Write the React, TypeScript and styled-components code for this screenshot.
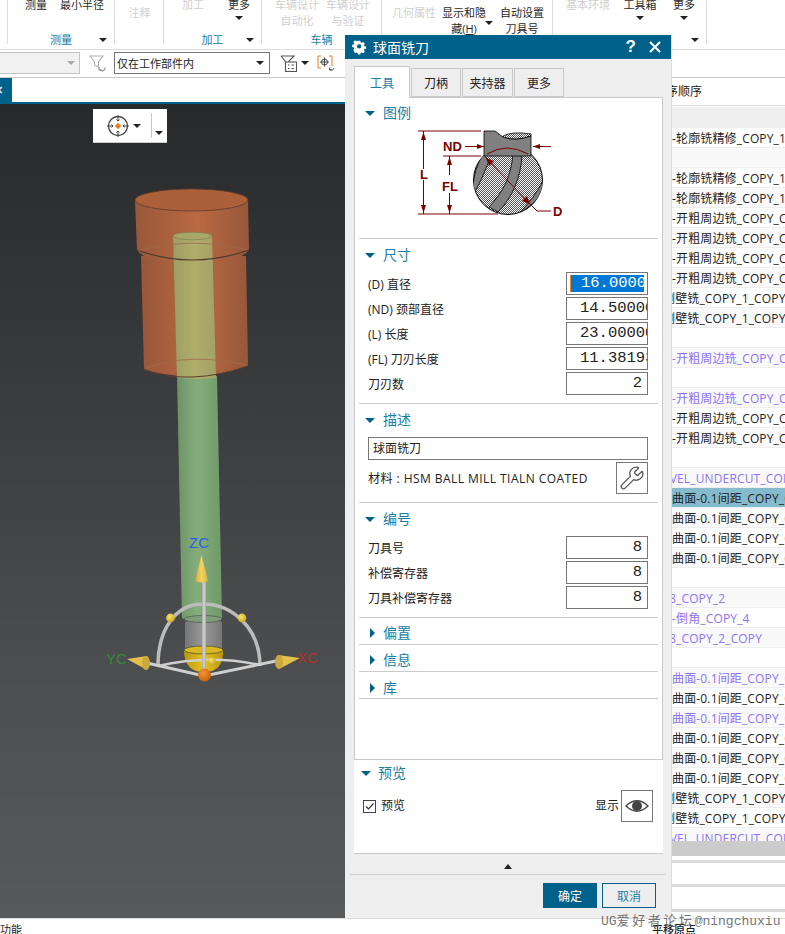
import React from "react";
import styled, { createGlobalStyle } from "styled-components";
import { Wrench } from "lucide-react";

const FONT = `"Open Sans", "Noto Sans CJK SC", "Noto Sans", sans-serif`;
const TEAL = "#00618a";
const HEAD = "#1a7ea3";

const Global = createGlobalStyle`
  html, body { margin: 0; padding: 0; background: #fff; overflow: hidden; }
  * { box-sizing: border-box; }
`;

const Page = styled.div`
  position: relative;
  width: 785px;
  height: 934px;
  overflow: hidden;
  font-family: ${FONT};
  font-size: 12px;
  color: #222;
  background: #fff;
`;

/* ---------- ribbon ---------- */
const Ribbon = styled.div`
  display: flex;
  height: 50px;
  border-bottom: 1px solid #dcdcdc;
  overflow: hidden;
  font-size: 11px;
`;
const Group = styled.div<{ $w: number }>`
  position: relative;
  flex: none;
  width: ${(p) => p.$w}px;
  height: 44px;
  border-right: 1px solid #dedede;
`;
const Tools = styled.div`
  display: flex;
  height: 32px;
`;
const Tool = styled.div<{ $w: number; $off?: boolean; $mid?: boolean }>`
  position: relative;
  flex: none;
  width: ${(p) => p.$w}px;
  display: flex;
  flex-direction: column;
  align-items: center;
  margin-top: ${(p) => (p.$mid ? 5 : -3)}px;
  line-height: 16px;
  white-space: nowrap;
  color: ${(p) => (p.$off ? "#cfcfcf" : "#2a2a2a")};
`;
const GroupFoot = styled.div`
  position: absolute;
  left: 0;
  right: 0;
  top: 32px;
  height: 16px;
  display: flex;
  justify-content: center;
  align-items: center;
  line-height: 16px;
  color: ${HEAD};
`;
const GroupCaret = styled.i`
  position: absolute;
  right: 7px;
  top: 6px;
  width: 0;
  height: 0;
  border: 4px solid transparent;
  border-top: 4px solid #222;
  border-bottom: 0;
`;
const Caret = styled.i<{ $gap?: number }>`
  display: inline-block;
  flex: none;
  width: 0;
  height: 0;
  margin-top: ${(p) => p.$gap ?? 0}px;
  border: 4px solid transparent;
  border-top: 4px solid #222;
  border-bottom: 0;
`;
const ToolCaret = styled(Caret)`
  position: absolute;
  right: -5px;
  top: 16px;
`;
const Spacer = styled.div<{ $w: number }>`
  flex: none;
  width: ${(p) => p.$w}px;
`;

/* ---------- top toolbar ---------- */
const Toolbar = styled.div`
  display: flex;
  align-items: center;
  height: 28px;
  border-bottom: 1px solid #c9c9c9;
  padding-bottom: 1px;
`;
const DisabledCombo = styled.div`
  flex: none;
  width: 81px;
  height: 22px;
  margin-left: -1px;
  border: 1px solid #c4c4c4;
  background: #f1f1f1;
  display: flex;
  align-items: center;
  justify-content: flex-end;
  padding-right: 4px;
  i { border-top-color: #aaa; }
`;
const Combo = styled.div`
  flex: none;
  width: 156px;
  height: 22px;
  border: 1px solid #777;
  display: flex;
  align-items: center;
  justify-content: space-between;
  padding: 0 5px 0 2px;
  font-size: 11px;
`;
const BarIcon = styled.svg<{ $l: number; $r: number }>`
  flex: none;
  margin-left: ${(p) => p.$l}px;
  margin-right: ${(p) => p.$r}px;
`;

/* ---------- content ---------- */
const Content = styled.div`
  display: flex;
  height: 840px;
`;
const LeftCol = styled.div`
  flex: none;
  width: 672px;
  display: flex;
  flex-direction: column;
`;
const TabStrip = styled.div`
  height: 26px;
  flex: none;
  border-bottom: 2px solid ${TEAL};
`;
const CloseTab = styled.div`
  width: 12px;
  height: 24px;
  background: ${TEAL};
  color: #dfe9ee;
  font-size: 11px;
  font-weight: 700;
  line-height: 24px;
  text-indent: -6px;
  overflow: hidden;
`;
const Viewport = styled.div`
  position: relative;
  height: 814px;
  background: linear-gradient(#28292b 0, #3a3b3d 35%, #4d4e50 70%, #58595b 100%);
  svg.scene { display: block; }
`;
const GizmoBar = styled.div`
  position: absolute;
  left: 93px;
  top: 5px;
  width: 74px;
  height: 34px;
  background: #fff;
  border-bottom: 1px solid #ccc;
  display: flex;
  align-items: center;
  padding-left: 13px;
`;
const GizmoSep = styled.div`
  width: 1px;
  height: 25px;
  background: #c8c8c8;
  margin: 0 3px 0 10px;
`;

/* ---------- right list ---------- */
const RightCol = styled.div`
  flex: none;
  width: 113px;
  display: flex;
  flex-direction: column;
  overflow: hidden;
`;
const ListHead = styled.div`
  height: 28px;
  flex: none;
  line-height: 28px;
  border-bottom: 1px solid #d8d8d8;
  font-size: 12px;
  margin-left: -6px;
  white-space: nowrap;
`;
const ColHead = styled.div`
  height: 22px;
  flex: none;
  background: #efefef;
  border-top: 1px solid #fff;
`;
const Rows = styled.div`
  height: 713px;
  flex: none;
  overflow: hidden;
`;
const Row = styled.div<{ $tone?: string; $sel?: boolean; $alt?: boolean; $shift?: number }>`
  height: 20px;
  line-height: 21px;
  font-size: 12px;
  letter-spacing: 0.15px;
  white-space: nowrap;
  overflow: hidden;
  border-bottom: 1px solid #eeeeee;
  color: ${(p) => (p.$tone === "p" ? "#8c74f5" : "#222")};
  background: ${(p) => (p.$sel ? "#84bccd" : p.$alt ? "#f9f9f9" : "#fff")};
  span { display: inline-block; margin-left: ${(p) => p.$shift ?? 0}px; }
`;
const GreyBar = styled.div`
  height: 15px;
  flex: none;
  background: #cbcbcb;
`;
const Tail = styled.div<{ $h: number }>`
  height: ${(p) => p.$h}px;
  flex: none;
  border-bottom: 3px solid #d9d9d9;
`;

/* ---------- status ---------- */
const Status = styled.div`
  position: relative;
  height: 16px;
  border-top: 1px solid #dcdcdc;
  line-height: 21px;
  font-size: 11px;
  color: #222;
`;
const StatusRight = styled.span`
  position: absolute;
  left: 652px;
  top: 0;
  font-weight: 500;
`;
const Watermark = styled.div`
  position: absolute;
  left: 601px;
  top: 914px;
  font-family: "Liberation Mono", "Noto Sans CJK SC", monospace;
  font-size: 13px;
  line-height: 16px;
  color: rgba(90, 90, 90, 0.85);
  white-space: nowrap;
  em { font-style: normal; letter-spacing: 2.6px; }
`;

/* ---------- dialog ---------- */
const Dialog = styled.div`
  position: absolute;
  left: 345px;
  top: 35px;
  width: 327px;
  height: 883px;
  background: #eeeeee;
  border-right: 1px solid #dcdcdc;
  display: flex;
  flex-direction: column;
`;
const TitleBar = styled.div`
  height: 24px;
  flex: none;
  background: ${TEAL};
  color: #fff;
  display: flex;
  align-items: center;
  padding: 0 10px 0 6px;
  font-size: 14px;
`;
const TitleText = styled.div`
  margin-left: 6px;
  flex: 1;
`;
const HelpMark = styled.span`
  font-family: "Liberation Sans", sans-serif;
  font-weight: 700;
  font-size: 17px;
  line-height: 24px;
  margin-right: 13px;
`;
const TabsRow = styled.div`
  display: flex;
  align-items: flex-end;
  height: 38px;
  flex: none;
  padding-left: 9px;
`;
const Tab = styled.div<{ $w: number; $active?: boolean }>`
  flex: none;
  width: ${(p) => p.$w}px;
  height: ${(p) => (p.$active ? 32 : 29)}px;
  margin-bottom: ${(p) => (p.$active ? -1 : 0)}px;
  margin-right: 1px;
  position: relative;
  z-index: ${(p) => (p.$active ? 2 : 0)};
  display: flex;
  align-items: center;
  justify-content: center;
  border: 1px solid #c9c9c9;
  border-bottom: ${(p) => (p.$active ? "0" : "1px solid #c9c9c9")};
  background: ${(p) => (p.$active ? "#fff" : "#eeeeee")};
  color: ${(p) => (p.$active ? HEAD : "#222")};
`;
const Panel = styled.div`
  flex: none;
  width: 309px;
  height: 663px;
  margin-left: 9px;
  background: #fff;
  border: 1px solid #c9c9c9;
`;
const Section = styled.section<{ $top: number; $bottom: number }>`
  margin: 0 4px;
  padding: ${(p) => p.$top}px 0 ${(p) => p.$bottom}px;
  border-bottom: 1px solid #cbcbcb;
`;
const Head = styled.div<{ $pad?: number; $gap?: number }>`
  display: flex;
  align-items: center;
  height: 16px;
  padding-left: ${(p) => p.$pad ?? 6}px;
  gap: ${(p) => p.$gap ?? 8}px;
  color: ${HEAD};
  font-size: 14px;
  line-height: 16px;
`;
const ArrowBox = styled.span`
  display: flex;
  width: 10px;
  flex: none;
`;
const ArrowDown = styled.i`
  width: 0;
  height: 0;
  border: 5px solid transparent;
  border-top: 5px solid ${TEAL};
  border-bottom: 0;
`;
const ArrowRight = styled.i`
  width: 0;
  height: 0;
  margin-left: 5px;
  border: 5px solid transparent;
  border-left: 5px solid ${TEAL};
  border-right: 0;
`;
const Legend = styled.svg`
  display: block;
  margin-left: 41px;
`;
const Fields = styled.div`
  display: flex;
  flex-direction: column;
  gap: 2px;
  margin-top: 9px;
  padding: 0 10px 0 9px;
`;
const Field = styled.div`
  display: flex;
  align-items: center;
  justify-content: space-between;
  height: 23px;
`;
const Box = styled.div<{ $num?: boolean; $sel?: boolean }>`
  position: relative;
  flex: none;
  width: 82px;
  height: 23px;
  border: 1px solid #777;
  background: #fff;
  overflow: hidden;
  white-space: nowrap;
  font-family: "Liberation Mono", monospace;
  font-size: 15.5px;
  line-height: 21px;
  color: #222;
  padding-left: ${(p) => (p.$num ? 0 : 13)}px;
  padding-right: ${(p) => (p.$num ? 5 : 0)}px;
  text-align: ${(p) => (p.$num ? "right" : "left")};
`;
const Selected = styled.span`
  position: absolute;
  left: 3px;
  top: 2px;
  width: 74px;
  height: 17px;
  background: #0078d7;
  color: #fff;
  line-height: 17px;
  padding-left: 10px;
  border-left: 1px solid #f08a24;
  overflow: hidden;
`;
const TextBox = styled.div`
  height: 23px;
  border: 1px solid #777;
  padding-left: 4px;
  line-height: 21px;
`;
const MaterialRow = styled.div`
  display: flex;
  align-items: center;
  justify-content: space-between;
  height: 32px;
`;
const MaterialText = styled.span`
  letter-spacing: 0.45px;
  white-space: nowrap;
`;
const IconBtn = styled.div`
  flex: none;
  width: 32px;
  height: 32px;
  border: 1px solid #777;
  background: #fff;
  display: flex;
  align-items: center;
  justify-content: center;
  color: #555;
`;
const PreviewArea = styled.div`
  flex: none;
  width: 309px;
  height: 94px;
  margin-left: 9px;
  background: #fff;
  border-bottom: 1px solid #c9c9c9;
  padding-top: 5px;
`;
const PreviewRow = styled.div`
  display: flex;
  align-items: center;
  margin-top: 9px;
  padding: 0 10px 0 9px;
  line-height: 14px;
`;
const Check = styled.span`
  flex: none;
  width: 13px;
  height: 13px;
  border: 1px solid #444;
  margin-right: 5px;
  display: flex;
  align-items: center;
  justify-content: center;
`;
const PreviewShow = styled.span`
  margin-left: auto;
  margin-right: 2px;
`;
const Fold = styled.div`
  flex: none;
  height: 21px;
  margin: 0 6px 0 5px;
  border-bottom: 1px solid #cfcfcf;
  display: flex;
  justify-content: center;
  align-items: center;
  padding-top: 5px;
  i {
    width: 0;
    height: 0;
    border: 4.5px solid transparent;
    border-bottom: 5px solid #222;
    border-top: 0;
  }
`;
const Footer = styled.div`
  display: flex;
  justify-content: flex-end;
  gap: 5px;
  padding: 8px 15px 0 0;
`;
const Btn = styled.div<{ $primary?: boolean }>`
  width: 54px;
  height: 25px;
  display: flex;
  align-items: center;
  justify-content: center;
  background: ${(p) => (p.$primary ? TEAL : "transparent")};
  color: ${(p) => (p.$primary ? "#fff" : HEAD)};
  border: 1px solid ${TEAL};
`;

const COPY = "-开粗周边铣_COPY_COPY";
const RING = "-轮廓铣精修_COPY_1";
const SURF = "曲面-0.1间距_COPY_COPY";
const WALL = "侧壁铣_COPY_1_COPY_1";
const UND = "BEVEL_UNDERCUT_COPY";

type R = { t?: string; p?: boolean; sel?: boolean; s?: number };
const rows: R[] = [
  { t: RING }, {}, { t: RING }, { t: RING }, { t: COPY }, { t: COPY }, { t: COPY }, { t: COPY },
  { t: WALL, s: -9 }, { t: WALL, s: -9 }, {}, { t: COPY, p: true }, {}, { t: COPY, p: true },
  { t: COPY }, { t: COPY }, {}, { t: UND, p: true, s: -17 }, { t: SURF, sel: true }, { t: SURF },
  { t: SURF }, { t: SURF }, {}, { t: "8_COPY_2", p: true, s: -3 }, { t: "-倒角_COPY_4", p: true },
  { t: "8_COPY_2_COPY", p: true, s: -3 }, {}, { t: SURF, p: true }, { t: SURF }, { t: SURF, p: true },
  { t: SURF }, { t: SURF }, { t: SURF }, { t: WALL, s: -9 }, { t: WALL, s: -9 }, { t: UND, p: true, s: -17 },
];

const Scene = () => (
  <svg className="scene" width={345} height={814} viewBox="0 104 345 814">
    <defs>
      <linearGradient id="org" x1="0" x2="1" y1="0" y2="0">
        <stop offset="0" stopColor="#99573a" />
        <stop offset="0.55" stopColor="#b96a42" />
        <stop offset="1" stopColor="#97573a" />
      </linearGradient>
      <linearGradient id="grn" x1="0" x2="1" y1="0" y2="0">
        <stop offset="0" stopColor="#6b9466" />
        <stop offset="0.45" stopColor="#86ad7c" />
        <stop offset="1" stopColor="#6f9969" />
      </linearGradient>
      <linearGradient id="olv" x1="0" x2="1" y1="0" y2="0">
        <stop offset="0" stopColor="#9d9d62" />
        <stop offset="0.5" stopColor="#b0ad6c" />
        <stop offset="1" stopColor="#a3a165" />
      </linearGradient>
      <linearGradient id="gry" x1="0" x2="1" y1="0" y2="0">
        <stop offset="0" stopColor="#777" />
        <stop offset="0.5" stopColor="#999" />
        <stop offset="1" stopColor="#777" />
      </linearGradient>
      <linearGradient id="yel" x1="0" x2="1" y1="0" y2="0">
        <stop offset="0" stopColor="#b8960f" />
        <stop offset="0.5" stopColor="#e8c31f" />
        <stop offset="1" stopColor="#b8960f" />
      </linearGradient>
      <linearGradient id="cone" x1="0" x2="1" y1="0" y2="0">
        <stop offset="0" stopColor="#c9a93c" />
        <stop offset="0.5" stopColor="#f4d35e" />
        <stop offset="1" stopColor="#d6b546" />
      </linearGradient>
      <linearGradient id="bar" x1="0" x2="1" y1="0" y2="0">
        <stop offset="0" stopColor="#a8a8a8" />
        <stop offset="0.5" stopColor="#d4d4d4" />
        <stop offset="1" stopColor="#a8a8a8" />
      </linearGradient>
      <radialGradient id="ball" cx="0.4" cy="0.35" r="0.7">
        <stop offset="0" stopColor="#f7e46a" />
        <stop offset="1" stopColor="#c9a41e" />
      </radialGradient>
      <radialGradient id="orb" cx="0.4" cy="0.35" r="0.7">
        <stop offset="0" stopColor="#f19433" />
        <stop offset="1" stopColor="#c9600f" />
      </radialGradient>
    </defs>
    {/* shaft */}
    <path d="M177 376 L182 618 Q202 628 222 618 L217 376 Z" fill="url(#grn)" />
    {/* lower holder */}
    <path d="M141 256 L144 369 Q190 385 248 366 L246 256 Z" fill="url(#org)" />
    {/* upper holder */}
    <path d="M135 200 L137 250 Q145 263 192 263 Q240 263 249 250 L248 200 Z" fill="url(#org)" />
    <ellipse cx="191.5" cy="200" rx="56.5" ry="11" fill="#ab6039" stroke="#5c3a2a" strokeWidth="0.8" />
    {/* inner tube */}
    <path d="M173 236 L177 378 Q197 380 216 378 L212 236 Z" fill="url(#olv)" />
    <ellipse cx="192.5" cy="236" rx="19.5" ry="3.8" fill="#a9a66a" stroke="#7d7b52" strokeWidth="0.7" />
    {/* rims */}
    <path d="M137 250 Q192 270 249 250" fill="none" stroke="#4e3a30" strokeWidth="1.2" />
    <path d="M138 251 Q190 236 248 250" fill="none" stroke="#a0694a" strokeWidth="0.8" />
    <path d="M144 370 Q190 386 248 366" fill="none" stroke="#5a3d2e" strokeWidth="1" />
    <path d="M146 368 Q190 352 246 365" fill="none" stroke="#a0694a" strokeWidth="0.8" />
    {/* tip */}
    <path d="M185 622 L185 648 L222 648 L222 622 Q203 612 185 622 Z" fill="url(#gry)" />
    <ellipse cx="203" cy="619" rx="19" ry="3.5" fill="#7f9f7a" stroke="#3d4a3c" strokeWidth="0.6" />
    <path d="M184 650 Q184 672 204 672 Q224 672 223 650 Z" fill="url(#yel)" />
    <ellipse cx="203.5" cy="650" rx="19.5" ry="4" fill="#dab81f" stroke="#333" strokeWidth="0.6" />
    {/* gizmo */}
    <path d="M158 666 C158 630 175 604 203 604 C232 604 260 628 260 666" fill="none" stroke="#bcbcbc" strokeWidth="3.5" />
    <path d="M158 666 Q210 654 260 665" fill="none" stroke="#cfcfcf" strokeWidth="2.5" />
    <path d="M147 663 L204 676 L276 661" fill="none" stroke="#cfcfcf" strokeWidth="3" />
    <rect x="202" y="580" width="4" height="92" fill="url(#bar)" />
    <path d="M201.5 555 L195 581 Q201.5 584 208 581 Z" fill="url(#cone)" />
    <path d="M127 659 L147 656 Q151 664 147 670 Z" fill="#e2c04b" />
    <ellipse cx="146" cy="663" rx="4" ry="7" fill="#c9a93c" />
    <path d="M300 658 L278 655 Q274 662 279 669 Z" fill="#e2c04b" />
    <ellipse cx="279" cy="662" rx="4" ry="7" fill="#c9a93c" />
    <circle cx="170.5" cy="618" r="4.4" fill="url(#ball)" />
    <circle cx="242" cy="618" r="4.4" fill="url(#ball)" />
    <circle cx="212" cy="661" r="3.8" fill="url(#ball)" />
    <circle cx="204.5" cy="675" r="6.5" fill="url(#orb)" />
    <text x="189" y="548" fontSize="15" fill="#2a62e6" fontFamily="'Liberation Sans', sans-serif">ZC</text>
    <text x="106" y="664" fontSize="15" fill="#36893a" fontFamily="'Liberation Sans', sans-serif">YC</text>
    <text x="297" y="663" fontSize="15" fill="#b3312e" fontFamily="'Liberation Sans', sans-serif">XC</text>
  </svg>
);

const LegendArt = () => (
  <Legend width={180} height={105} viewBox="0 0 180 105">
    <defs>
      <pattern id="chk" width="2" height="2" patternUnits="userSpaceOnUse">
        <rect width="2" height="2" fill="#fff" />
        <rect width="1" height="1" fill="#555" />
        <rect x="1" y="1" width="1" height="1" fill="#555" />
      </pattern>
      <clipPath id="sphere"><circle cx="108" cy="59" r="34.5" /></clipPath>
    </defs>
    <circle cx="108" cy="59" r="34.5" fill="url(#chk)" stroke="#000" />
    <g clipPath="url(#sphere)" fill="#808080" stroke="#000" strokeWidth="0.8">
      <path d="M83 33 L89 40 Q82 58 75 71 L73 66 Q74 48 83 33 Z" />
      <path d="M113 33 C111 56 103 71 89 86 L98 91 C112 77 121 57 122 33 Z" />
      <path d="M144 58 L144 70 Q134 84 118 93 Q134 78 144 58 Z" />
    </g>
    <path d="M103 15 Q112 10 131 13 L131 15 Q115 21 103 16 Z" fill="url(#chk)" stroke="#000" strokeWidth="0.8" />
    <path d="M84 10 L95 10 L103 16 Q115 21 131 15 L131 35 L84 35 Z" fill="#808080" stroke="#000" strokeWidth="0.8" />
    <g stroke="#7a0000" fill="none" strokeWidth="1">
      <path d="M87 33 Q107 21 128 33" />
      <path d="M18 10 H81 M18 93 H98 M43 35 H81" />
      <path d="M23.5 10 V48 M23.5 59 V93 M49.5 35 V54 M49.5 72 V93" />
      <path d="M65 25.5 H84 M133 25.5 H151" />
      <path d="M86 37 L130 83 L137 90 H151" />
    </g>
    <g fill="#7a0000">
      <path d="M23.5 11 L21 19 H26 Z M23.5 92 L21 84 H26 Z M49.5 36 L47 44 H52 Z M49.5 92 L47 84 H52 Z" />
      <path d="M84 25.5 L77 23 V28 Z M133 25.5 L140 23 V28 Z" />
      <path d="M86 37 L89 45 L94 40 Z M130 83 L127 75 L122 80 Z" />
    </g>
    <g fill="#7a0000" fontWeight="700" fontSize="13" fontFamily="'Liberation Sans', sans-serif">
      <text x="43" y="30">ND</text>
      <text x="20" y="58">L</text>
      <text x="42" y="70">FL</text>
      <text x="153" y="95">D</text>
    </g>
  </Legend>
);

const Gear = () => (
  <svg width="16" height="16" viewBox="0 0 16 16">
    <path
      fill="#fff"
      fillRule="evenodd"
      d="M6.6 1h2.8l.4 2 1.3.6 1.8-1 1.9 2-1 1.7.5 1.3 2 .4v2.7l-2 .4-.5 1.3 1 1.8-1.9 1.9-1.8-1-1.3.5-.4 2H6.6l-.4-2-1.3-.5-1.8 1L1.2 12.2l1-1.8-.5-1.3-2-.4V6l2-.4.5-1.3-1-1.7 1.9-2 1.8 1 1.3-.6zM8 5.2a2.6 2.6 0 100 5.2 2.6 2.6 0 000-5.2z"
      transform="translate(1.4 .8) scale(.84)"
    />
  </svg>
);

const CloseX = () => (
  <svg width="12" height="12" viewBox="0 0 12 12" stroke="#fff" strokeWidth="2">
    <path d="M1 1l10 10M11 1L1 11" />
  </svg>
);

const EyeIcon = () => (
  <svg width="24" height="16" viewBox="0 0 24 16" fill="none">
    <path d="M1 8 Q12 -2.5 23 8 Q12 18.5 1 8 Z" stroke="#444" strokeWidth="1.3" />
    <circle cx="12" cy="8" r="5" fill="#444" />
  </svg>
);

const fields = [
  { label: "(ND) 颈部直径", v: "14.50000" },
  { label: "(L) 长度", v: "23.00000" },
  { label: "(FL) 刀刃长度", v: "11.38193" },
];

const App = () => (
  <>
    <Global />
    <Page>
      <Ribbon>
        <Group $w={8} />
        <Group $w={107}>
          <Tools>
            <Spacer $w={8} />
            <Tool $w={40}>测量</Tool>
            <Tool $w={52}>最小半径</Tool>
          </Tools>
          <GroupFoot>测量<GroupCaret /></GroupFoot>
        </Group>
        <Group $w={49}>
          <Tools>
            <Tool $w={49} $off $mid>注释</Tool>
          </Tools>
        </Group>
        <Group $w={98}>
          <Tools>
            <Spacer $w={5} />
            <Tool $w={48} $off>加工</Tool>
            <Tool $w={44}>更多<Caret $gap={3} /></Tool>
          </Tools>
          <GroupFoot>加工<GroupCaret /></GroupFoot>
        </Group>
        <Group $w={120}>
          <Tools>
            <Spacer $w={6} />
            <Tool $w={58} $off>车辆设计<span>自动化</span></Tool>
            <Tool $w={44} $off>车辆设计<span>与验证</span></Tool>
          </Tools>
          <GroupFoot>车辆</GroupFoot>
        </Group>
        <Group $w={171}>
          <Tools>
            <Spacer $w={6} />
            <Tool $w={52} $off $mid>几何属性</Tool>
            <Tool $w={48} $mid>显示和隐<span>藏(<u>H</u>)</span><ToolCaret /></Tool>
            <Spacer $w={10} />
            <Tool $w={48} $mid>自动设置<span>刀具号</span></Tool>
          </Tools>
        </Group>
        <Group $w={154}>
          <Tools>
            <Spacer $w={6} />
            <Tool $w={58} $off>基本环境</Tool>
            <Tool $w={46}>工具箱<Caret $gap={3} /></Tool>
            <Tool $w={42}>更多<Caret $gap={3} /></Tool>
          </Tools>
          <GroupFoot><GroupCaret /></GroupFoot>
        </Group>
      </Ribbon>
      <Toolbar>
        <DisabledCombo><Caret /></DisabledCombo>
        <BarIcon $l={9} $r={8} width="17" height="18" viewBox="0 0 17 18" fill="none" stroke="#b0b0b0" strokeWidth="1.1">
          <path d="M1 2h13L9.5 8v5L5.5 11V8z" />
          <path d="M16 13.5a3 3 0 01-5.5 2M10 13v3h3" stroke="#8d8d8d" />
        </BarIcon>
        <Combo>仅在工作部件内<Caret /></Combo>
        <BarIcon $l={10} $r={3} width="18" height="18" viewBox="0 0 18 18" fill="none" stroke="#555" strokeWidth="1.1">
          <path d="M1 2h13L9 7v1M5 8V7L1 2" />
          <rect x="5.5" y="8" width="11" height="9.5" fill="#fff" />
          <path d="M8 11h1.5M8 14.5h1.5M11.5 11h2.5M11.5 14.5h2.5" />
        </BarIcon>
        <Caret />
        <BarIcon $l={8} $r={0} width="18" height="18" viewBox="0 0 18 18" fill="none">
          <path d="M4 2H1v12h3M12 2h3v10" stroke="#e07c1e" />
          <circle cx="7.5" cy="8" r="3" stroke="#444" />
          <path d="M3 8h9M7.5 3.5v9" stroke="#444" />
          <path d="M17 14a2.5 2.5 0 01-4 1.5M12.5 13.5V16H15" stroke="#555" />
        </BarIcon>
      </Toolbar>
      <Content>
        <LeftCol>
          <TabStrip><CloseTab>✕</CloseTab></TabStrip>
          <Viewport>
            <Scene />
            <GizmoBar>
              <svg width="24" height="24" viewBox="0 0 24 24" fill="none" stroke="#444">
                <circle cx="12" cy="12" r="9.5" strokeWidth="1.3" />
                <path d="M12 1v6M12 17v6M1 12h6M17 12h6" />
                <path d="M10.5 5.5L12 7l1.5-1.5M10.5 18.5L12 17l1.5 1.5M5.5 10.5L7 12l-1.5 1.5M18.5 10.5L17 12l1.5 1.5" />
                <path d="M12 8.8L15.2 12 12 15.2 8.8 12z" fill="#ea7d1c" stroke="none" />
              </svg>
              <Spacer $w={3} />
              <Caret />
              <GizmoSep />
              <Caret $gap={14} />
            </GizmoBar>
          </Viewport>
        </LeftCol>
        <RightCol>
          <ListHead>序顺序</ListHead>
          <ColHead />
          <Rows>
            {rows.map((r, i) => (
              <Row key={i} $tone={r.p ? "p" : undefined} $sel={r.sel} $alt={i % 2 === 1} $shift={r.s}>
                <span>{r.t ?? "\u00a0"}</span>
              </Row>
            ))}
          </Rows>
          <GreyBar />
          <Tail $h={7} />
          <Tail $h={24} />
          <Tail $h={25} />
        </RightCol>
      </Content>
      <Status>
        功能
        <StatusRight>平移原点</StatusRight>
      </Status>

      <Dialog>
        <TitleBar>
          <Gear />
          <TitleText>球面铣刀</TitleText>
          <HelpMark>?</HelpMark>
          <CloseX />
        </TitleBar>
        <TabsRow>
          <Tab $w={56} $active>工具</Tab>
          <Tab $w={50}>刀柄</Tab>
          <Tab $w={51}>夹持器</Tab>
          <Tab $w={50}>更多</Tab>
        </TabsRow>
        <Panel>
          <Section $top={7} $bottom={12}>
            <Head><ArrowBox><ArrowDown /></ArrowBox>图例</Head>
            <LegendArt />
          </Section>
          <Section $top={8} $bottom={8}>
            <Head><ArrowBox><ArrowDown /></ArrowBox>尺寸</Head>
            <Fields>
              <Field>
                (D) 直径
                <Box><Selected>16.00000</Selected></Box>
              </Field>
              {fields.map((f) => (
                <Field key={f.label}>
                  {f.label}
                  <Box>{f.v}</Box>
                </Field>
              ))}
              <Field>
                刀刃数
                <Box $num>2</Box>
              </Field>
            </Fields>
          </Section>
          <Section $top={8} $bottom={8}>
            <Head><ArrowBox><ArrowDown /></ArrowBox>描述</Head>
            <Fields>
              <TextBox>球面铣刀</TextBox>
              <MaterialRow>
                <MaterialText>材料 : HSM BALL MILL TIALN COATED</MaterialText>
                <IconBtn><Wrench size={26} strokeWidth={1.2} /></IconBtn>
              </MaterialRow>
            </Fields>
          </Section>
          <Section $top={8} $bottom={8}>
            <Head><ArrowBox><ArrowDown /></ArrowBox>编号</Head>
            <Fields>
              <Field>刀具号<Box $num>8</Box></Field>
              <Field>补偿寄存器<Box $num>8</Box></Field>
              <Field>刀具补偿寄存器<Box $num>8</Box></Field>
            </Fields>
          </Section>
          <Section $top={7} $bottom={3}>
            <Head><ArrowBox><ArrowRight /></ArrowBox>偏置</Head>
          </Section>
          <Section $top={7} $bottom={3}>
            <Head><ArrowBox><ArrowRight /></ArrowBox>信息</Head>
          </Section>
          <Section $top={8} $bottom={2}>
            <Head><ArrowBox><ArrowRight /></ArrowBox>库</Head>
          </Section>
        </Panel>
        <PreviewArea>
          <Head $gap={7} $pad={7}><ArrowBox><ArrowDown /></ArrowBox>预览</Head>
          <PreviewRow>
            <Check>
              <svg width="11" height="11" viewBox="0 0 11 11" fill="none" stroke="#333" strokeWidth="1.2">
                <path d="M2 5.5l2.5 2.5L9.5 2.5" />
              </svg>
            </Check>
            预览
            <PreviewShow>显示</PreviewShow>
            <IconBtn><EyeIcon /></IconBtn>
          </PreviewRow>
        </PreviewArea>
        <Fold><i /></Fold>
        <Footer>
          <Btn $primary>确定</Btn>
          <Btn>取消</Btn>
        </Footer>
      </Dialog>
      <Watermark>UG<em>爱好者论坛</em>@ningchuxiu</Watermark>
    </Page>
  </>
);

export default App;
